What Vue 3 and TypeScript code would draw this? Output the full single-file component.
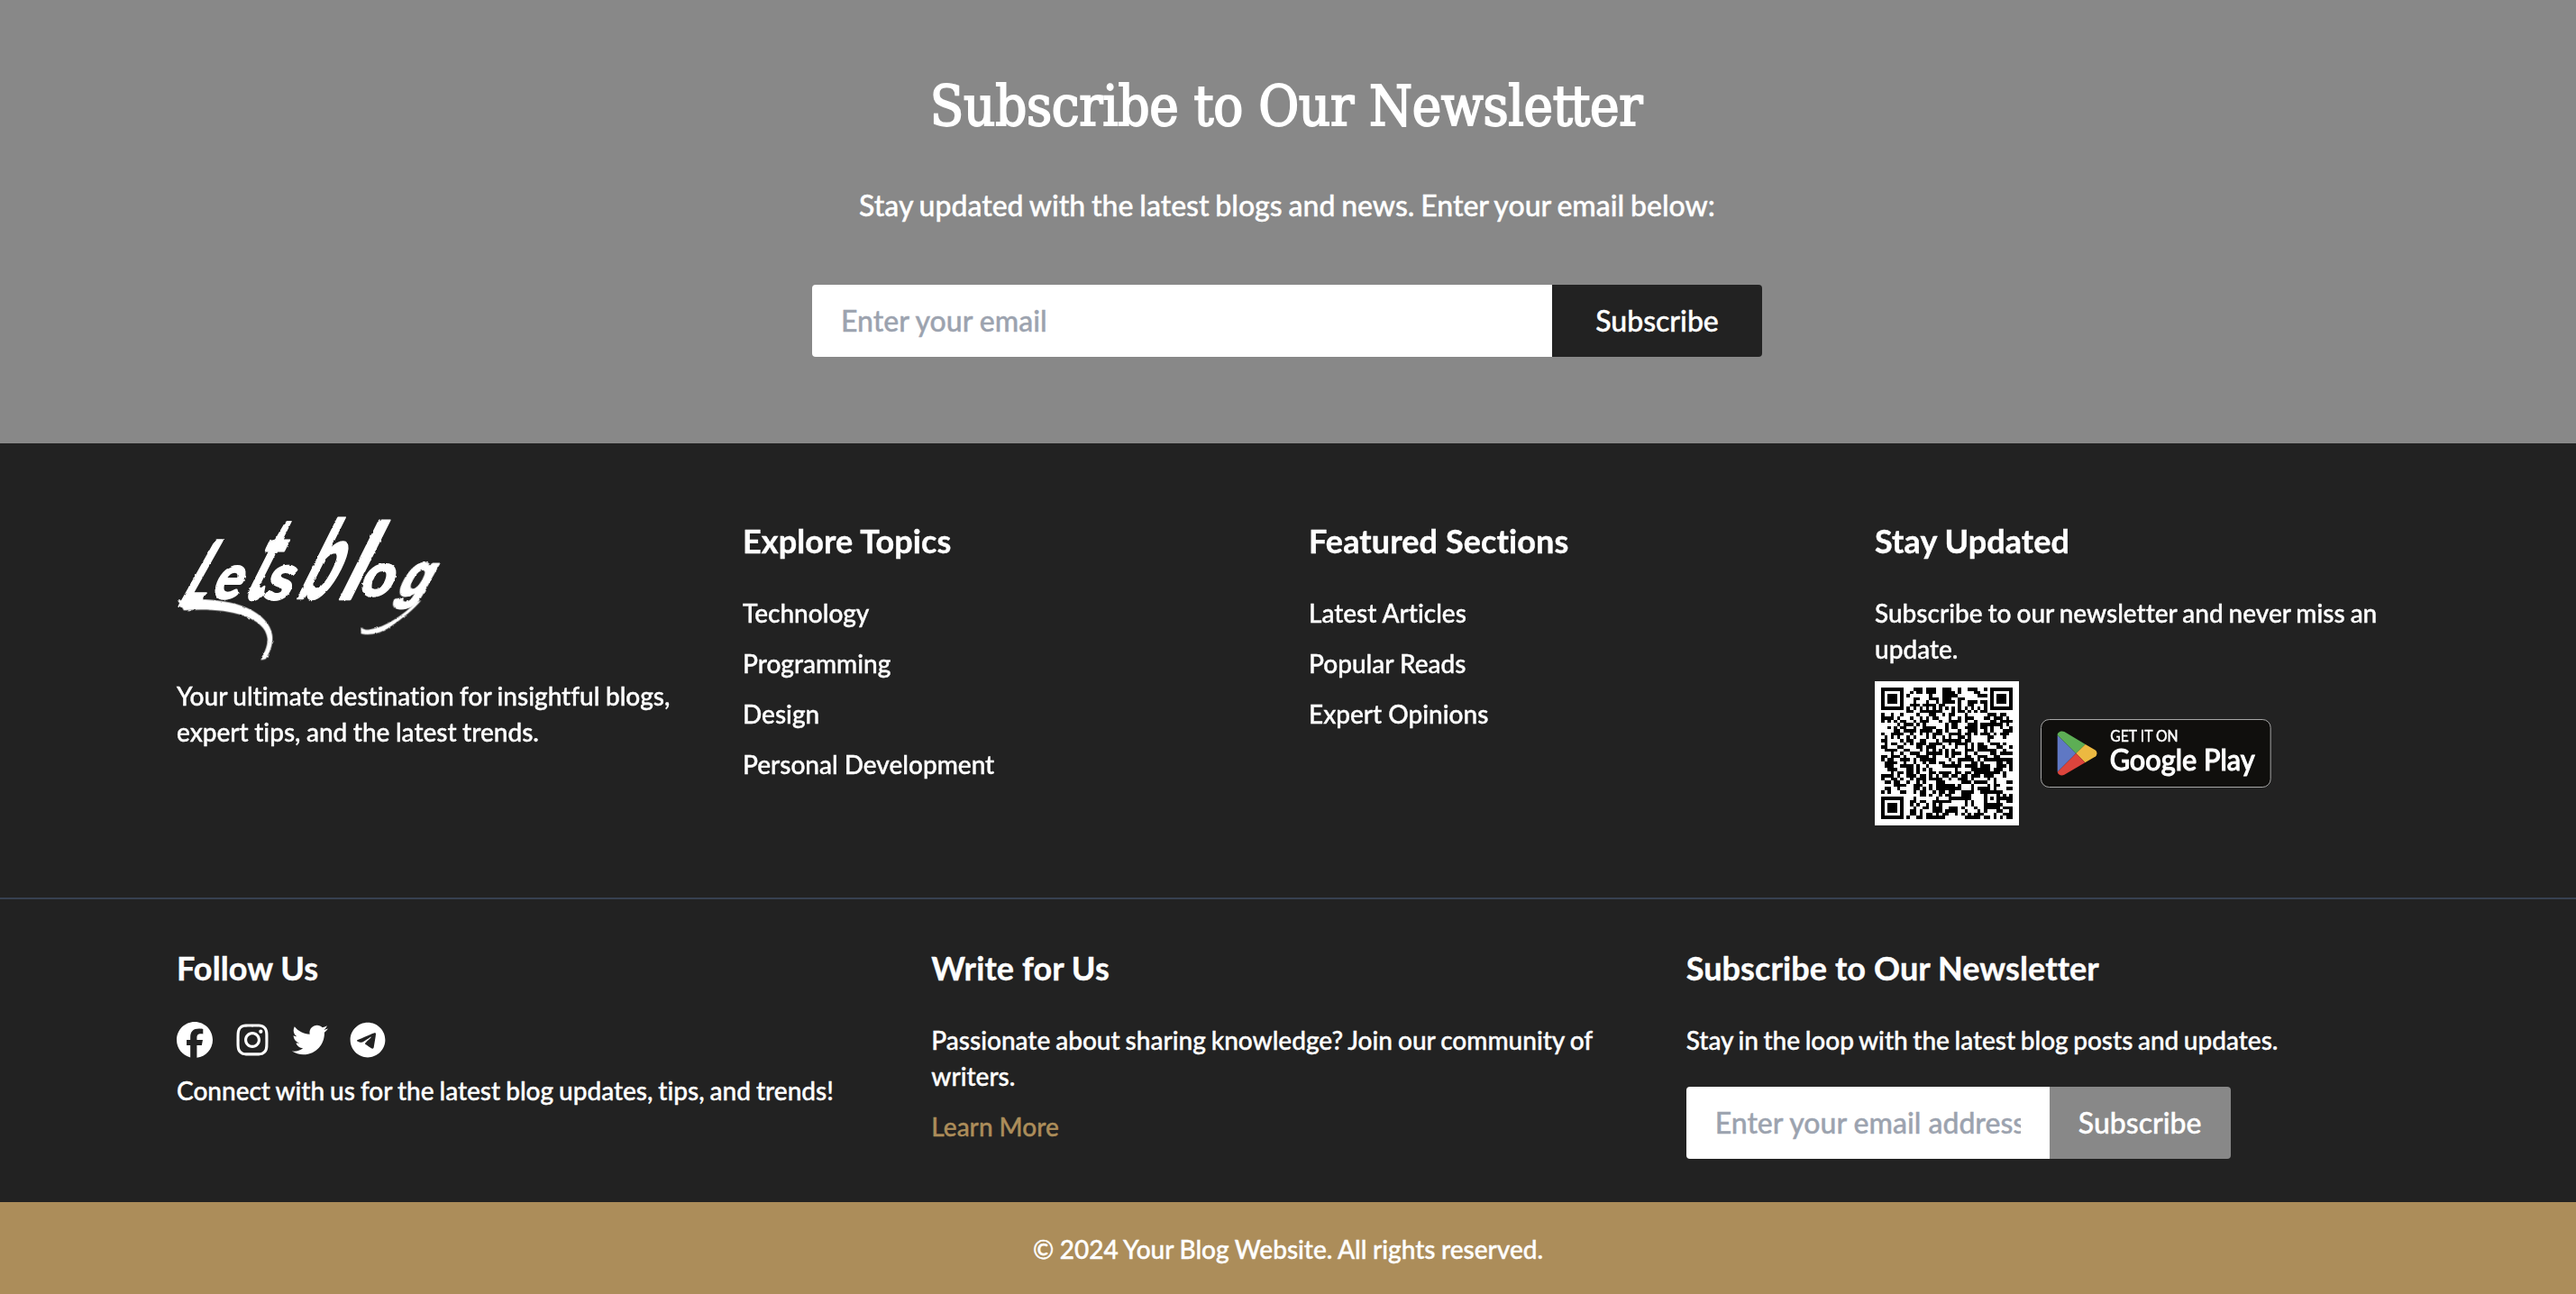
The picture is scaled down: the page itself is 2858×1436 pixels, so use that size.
<script setup lang="ts">
const topics: string[] = ['Technology', 'Programming', 'Design', 'Personal Development']
const sections: string[] = ['Latest Articles', 'Popular Reads', 'Expert Opinions']

interface SocialIcon {
  name: string
  viewBox: string
  path: string
}

const socials: SocialIcon[] = [
  {
    name: 'Facebook',
    viewBox: '0 0 512 512',
    path: 'M512 256C512 114.6 397.4 0 256 0S0 114.6 0 256C0 376 82.7 476.8 194.2 504.5V334.2H141.4V256h52.8V222.3c0-87.1 39.4-127.5 125-127.5c16.2 0 44.2 3.2 55.7 6.4V172c-6-.6-16.5-1-29.6-1c-42 0-58.2 15.9-58.2 57.2V256h83.6l-14.4 78.2H287V510.1C413.8 494.8 512 386.9 512 256h0z',
  },
  {
    name: 'Instagram',
    viewBox: '-32 0 512 512',
    path: 'M224.1 141c-63.6 0-114.9 51.3-114.9 114.9s51.3 114.9 114.9 114.9S339 319.5 339 255.9 287.7 141 224.1 141zm0 189.6c-41.1 0-74.7-33.5-74.7-74.7s33.5-74.7 74.7-74.7 74.7 33.5 74.7 74.7-33.6 74.7-74.7 74.7zm146.4-194.3c0 14.9-12 26.8-26.8 26.8-14.9 0-26.8-12-26.8-26.8s12-26.8 26.8-26.8 26.8 12 26.8 26.8zm76.1 27.2c-1.7-35.9-9.9-67.7-36.2-93.9-26.2-26.2-58-34.4-93.9-36.2-37-2.1-147.9-2.1-184.9 0-35.8 1.7-67.6 9.9-93.9 36.1s-34.4 58-36.2 93.9c-2.1 37-2.1 147.9 0 184.9 1.7 35.9 9.9 67.7 36.2 93.9s58 34.4 93.9 36.2c37 2.1 147.9 2.1 184.9 0 35.9-1.7 67.7-9.9 93.9-36.2 26.2-26.2 34.4-58 36.2-93.9 2.1-37 2.1-147.8 0-184.8zM398.8 388c-7.8 19.6-22.9 34.7-42.6 42.6-29.5 11.7-99.5 9-132.1 9s-102.7 2.6-132.1-9c-19.6-7.8-34.7-22.9-42.6-42.6-11.7-29.5-9-99.5-9-132.1s-2.6-102.7 9-132.1c7.8-19.6 22.9-34.7 42.6-42.6 29.5-11.7 99.5-9 132.1-9s102.7-2.6 132.1 9c19.6 7.8 34.7 22.9 42.6 42.6 11.7 29.5 9 99.5 9 132.1s2.7 102.7-9 132.1z',
  },
  {
    name: 'Twitter',
    viewBox: '0 0 512 512',
    path: 'M459.37 151.716c.325 4.548.325 9.097.325 13.645 0 138.72-105.583 298.558-298.558 298.558-59.452 0-114.68-17.219-161.137-47.106 8.447.974 16.568 1.299 25.34 1.299 49.055 0 94.213-16.568 130.274-44.832-46.132-.975-84.792-31.188-98.112-72.772 6.498.974 12.995 1.624 19.818 1.624 9.421 0 18.843-1.3 27.614-3.573-48.081-9.747-84.143-51.98-84.143-102.985v-1.299c13.969 7.797 30.214 12.67 47.431 13.319-28.264-18.843-46.781-51.005-46.781-87.391 0-19.492 5.197-37.36 14.294-52.954 51.655 63.675 129.3 105.258 216.365 109.807-1.624-7.797-2.599-15.918-2.599-24.04 0-57.828 46.782-104.934 104.934-104.934 30.213 0 57.502 12.67 76.67 33.137 23.715-4.548 46.456-13.32 66.599-25.34-7.798 24.366-24.366 44.833-46.132 57.827 21.117-2.273 41.584-8.122 60.426-16.243-14.292 20.791-32.161 39.308-52.628 54.253z',
  },
  {
    name: 'Telegram',
    viewBox: '-8 0 512 512',
    path: 'M248 8C111.033 8 0 119.033 0 256S111.033 504 248 504 496 392.967 496 256 384.967 8 248 8ZM362.952 176.66c-3.732 39.215-19.881 134.378-28.1 178.3-3.476 18.584-10.322 24.816-16.948 25.425-14.4 1.326-25.338-9.517-39.287-18.661-21.827-14.308-34.158-23.215-55.346-37.177-24.485-16.135-8.612-25 5.342-39.5 3.652-3.793 67.107-61.51 68.335-66.746.153-.655.3-3.1-1.154-4.384s-3.59-.849-5.135-.5q-3.283.746-104.608 69.142-14.845 10.194-26.894 9.934c-8.855-.191-25.888-5.006-38.551-9.123-15.531-5.048-27.875-7.717-26.8-16.291q.84-6.7 18.45-13.7 108.446-47.248 144.628-62.3c68.872-28.647 83.183-33.623 92.511-33.789 2.052-.034 6.639.474 9.61 2.885a10.452 10.452 0 0 1 3.53 6.716A43.765 43.765 0 0 1 362.952 176.66Z',
  },
]

// 41 x 41 module code: finder, timing and alignment patterns with seeded data cells
const SIZE = 41

function square(x: number, y: number, cx: number, cy: number, outer: number): boolean | null {
  const d = Math.max(Math.abs(x - cx), Math.abs(y - cy))
  if (outer === 3) {
    if (d > 4) return null
    return d === 3 || d <= 1
  }
  return d > outer ? null : d !== 1
}

function buildCode(): string {
  let seed = 20241
  let d = ''
  for (let y = 0; y < SIZE; y++) {
    for (let x = 0; x < SIZE; x++) {
      seed = (seed * 48271) % 2147483647
      const random = (seed >> 10) % 100 < 50
      const fixed =
        square(x, y, 3, 3, 3) ??
        square(x, y, SIZE - 4, 3, 3) ??
        square(x, y, 3, SIZE - 4, 3) ??
        square(x, y, 34, 34, 2)
      const timing = y === 6 ? x % 2 === 0 : x === 6 ? y % 2 === 0 : null
      if (fixed ?? timing ?? random) d += `M${x} ${y}h1v1h-1z`
    }
  }
  return d
}

const codePath: string = buildCode()
</script>

<template>
  <div class="page">
    <section class="hero">
      <h2 class="hero-title">Subscribe to Our Newsle<span class="joined">t</span>ter</h2>
      <p class="hero-text">Stay updated with the latest blogs and news. Enter your email below:</p>
      <form class="form hero-form" @submit.prevent>
        <input class="field" type="email" placeholder="Enter your email" />
        <button class="button dark" type="submit">Subscribe</button>
      </form>
    </section>

    <footer class="footer">
      <div class="footer-top">
        <div class="row four">
          <div class="col">
            <svg class="logo" viewBox="48 36 870 492" role="img" aria-label="Letsblog">
              <defs>
                <filter id="brush" x="-5%" y="-5%" width="110%" height="110%">
                  <feTurbulence type="fractalNoise" baseFrequency="0.06" numOctaves="3" seed="4" />
                  <feDisplacementMap in="SourceGraphic" scale="7" xChannelSelector="R" yChannelSelector="G" />
                </filter>
              </defs>
              <g fill="#fff" filter="url(#brush)">
                <g class="letters">
                  <text class="initial" font-size="290" transform="matrix(.5 0 -.56 1 48 332)">L</text>
                  <text font-size="205" transform="matrix(.84 0 -.4 1 158 312)">e</text>
                  <text font-size="384" transform="matrix(.5 0 -.5 1 258 314)">t</text>
                  <text font-size="212" transform="matrix(.95 0 -.35 1 332 314)">s</text>
                  <text font-size="360" transform="matrix(.56 0 -.5 1 438 312)">b</text>
                  <text font-size="352" transform="matrix(.8 0 -.5 1 574 314)">l</text>
                  <text font-size="200" transform="matrix(.94 0 -.38 1 648 304)">o</text>
                  <text class="tail" font-size="200" transform="matrix(.84 0 -.55 1 772 302)">g</text>
                </g>
                <path d="M52 320L72 352C150 346 215 352 265 368C318 386 346 412 350 445C352 470 340 492 328 518L344 514C360 490 370 462 366 434C360 396 330 366 282 344C220 316 130 312 52 320Z" />
                <path d="M845 325C800 368 745 408 690 416C678 418 668 414 661 408L662 430C690 436 725 430 760 406C800 378 838 348 862 318Z" />
              </g>
            </svg>
            <p class="text logo-text">Your ultimate destination for insightful blogs, expert tips, and the latest trends.</p>
          </div>
          <div class="col">
            <h3 class="title">Explore Topics</h3>
            <ul class="links">
              <li v-for="item in topics" :key="item">{{ item }}</li>
            </ul>
          </div>
          <div class="col">
            <h3 class="title">Featured Sections</h3>
            <ul class="links">
              <li v-for="item in sections" :key="item">{{ item }}</li>
            </ul>
          </div>
          <div class="col">
            <h3 class="title">Stay Updated</h3>
            <p class="text">Subscribe to our newsletter and never miss an update.</p>
            <div class="apps">
              <svg class="code" viewBox="0 0 160 160" aria-label="QR code">
                <rect width="160" height="160" fill="#fff" />
                <path :d="codePath" transform="translate(7 7) scale(3.561)" fill="#000" shape-rendering="crispEdges" />
              </svg>
              <svg class="badge" viewBox="43 54 768 228" aria-label="Get it on Google Play">
                <rect x="44.5" y="55.5" width="764" height="225" rx="27" fill="#100f0d" stroke="#a6a6a6" stroke-width="3" />
                <path d="M99 107V230L161 168Z" fill="#5f78c4" />
                <path d="M99 107C99 97 112 91 122 96L192 138L161 168Z" fill="#5dae55" />
                <path d="M192 138L223 156C233 162 233 174 223 180L191 199L161 168Z" fill="#ecb941" />
                <path d="M99 230C102 240 112 244 122 239L191 199L161 168Z" fill="#dc443c" />
                <text class="badge-text" x="275" y="128" font-size="49" textLength="226" lengthAdjust="spacingAndGlyphs">GET IT ON</text>
                <text class="badge-text large" x="273" y="224" font-size="97" textLength="483" lengthAdjust="spacingAndGlyphs">Google Play</text>
              </svg>
            </div>
          </div>
        </div>
      </div>

      <div class="footer-bottom">
        <div class="row three">
          <div class="col">
            <h3 class="title">Follow Us</h3>
            <div class="socials">
              <svg v-for="icon in socials" :key="icon.name" :viewBox="icon.viewBox" :aria-label="icon.name">
                <path :d="icon.path" fill="#fff" />
              </svg>
            </div>
            <p class="text">Connect with us for the latest blog updates, tips, and trends!</p>
          </div>
          <div class="col">
            <h3 class="title">Write for Us</h3>
            <p class="text">Passionate about sharing knowledge? Join our community of writers.</p>
            <p class="more">Learn More</p>
          </div>
          <div class="col">
            <h3 class="title">Subscribe to Our Newsletter</h3>
            <p class="text loop">Stay in the loop with the latest blog posts and updates.</p>
            <form class="form small-form" @submit.prevent>
              <input class="field" type="email" placeholder="Enter your email address" />
              <button class="button gray" type="submit">Subscribe</button>
            </form>
          </div>
        </div>
      </div>
    </footer>

    <div class="copyright">© 2024 Your Blog Website. All rights reserved.</div>
  </div>
</template>

<style>
body {
  margin: 0;
}
</style>

<style scoped>
.page {
  height: 1436px;
  overflow: hidden;
  font-family: Lato, "Liberation Sans", sans-serif;
  font-weight: 500;
  font-size: 28px;
  line-height: 40px;
  font-variant-ligatures: none;
  -webkit-text-stroke: 0.4px currentColor;
  color: #fff;
  background: #222;
}
h2, h3, p, ul {
  margin: 0;
  padding: 0;
}
.hero {
  box-sizing: border-box;
  height: 492px;
  padding-top: 80px;
  background: #888;
  display: flex;
  flex-direction: column;
  align-items: center;
}
.hero-title {
  font-family: "DejaVu Serif Condensed", "DejaVu Serif", serif;
  font-stretch: condensed;
  font-weight: 400;
  font-size: 61px;
  line-height: 76px;
  letter-spacing: -0.3px;
  margin-right: 4px;
  white-space: nowrap;
  -webkit-text-stroke: 1.8px currentColor;
}
.joined {
  letter-spacing: -2.5px;
}
.hero-text {
  margin-top: 48px;
  margin-right: 2px;
  font-size: 32px;
  line-height: 48px;
  word-spacing: -1.3px;
}
.form {
  display: flex;
  height: 80px;
}
.hero-form {
  width: 1054px;
  margin-top: 64px;
  margin-right: 2px;
}
.field {
  box-sizing: border-box;
  flex: 1;
  min-width: 0;
  border: 0;
  border-radius: 4px 0 0 4px;
  padding: 0 32px;
  background: #fff;
  color: #222;
  font: inherit;
  font-size: 32px;
  line-height: 48px;
}
.field::placeholder {
  color: #9ca3af;
  opacity: 1;
}
.button {
  border: 0;
  border-radius: 0 4px 4px 0;
  color: #fff;
  font: inherit;
  font-size: 32px;
  line-height: 48px;
  padding: 0;
}
.dark {
  width: 233px;
  background: #222;
}
.gray {
  width: 201px;
  background: #888;
}
.footer-top {
  padding: 80px 0;
  border-bottom: 2px solid #374151;
}
.footer-bottom {
  padding: 48px 0;
}
.row {
  display: grid;
  column-gap: 48px;
  width: 2464px;
  margin-left: 196px;
}
.four {
  height: 344px;
  grid-template-columns: repeat(4, 1fr);
}
.three {
  height: 240px;
  grid-template-columns: repeat(3, 1fr);
}
.col {
  min-width: 0;
}
.text {
  word-spacing: -1.1px;
}
.text.logo-text {
  margin-top: 16px;
  word-spacing: -0.6px;
}
.text.loop {
  word-spacing: -1.5px;
}
.logo {
  display: block;
  width: 290px;
  height: 164px;
  overflow: visible;
  font-family: Lato, sans-serif;
  font-weight: 700;
  -webkit-text-stroke: 0;
}
.letters {
  stroke: #fff;
  stroke-width: 8px;
  stroke-linejoin: round;
}
.initial {
  stroke-width: 18px;
}
.tail {
  font-family: "Liberation Sans", sans-serif;
}
.title {
  font-size: 36px;
  font-weight: 700;
  line-height: 56px;
  letter-spacing: 0.1px;
  margin-bottom: 32px;
}
.links {
  list-style: none;
  display: grid;
  row-gap: 16px;
}
.apps {
  display: flex;
  align-items: center;
  gap: 24px;
  margin-top: 16px;
}
.code {
  width: 160px;
  height: 160px;
}
.badge {
  width: 256px;
  height: 76px;
  -webkit-text-stroke: 0;
}
.badge-text {
  fill: #fff;
  stroke: #fff;
  stroke-width: 1px;
}
.badge-text.large {
  stroke-width: 3px;
}
.socials {
  display: flex;
  gap: 24px;
  margin-bottom: 16px;
}
.socials svg {
  width: 40px;
  height: 40px;
}
.more {
  margin-top: 16px;
  color: #ac8d5a;
}
.small-form {
  width: 604px;
  margin-top: 32px;
}
.copyright {
  padding: 32px 0;
  text-align: center;
  word-spacing: -0.5px;
  background: #ac8d5a;
}
</style>
